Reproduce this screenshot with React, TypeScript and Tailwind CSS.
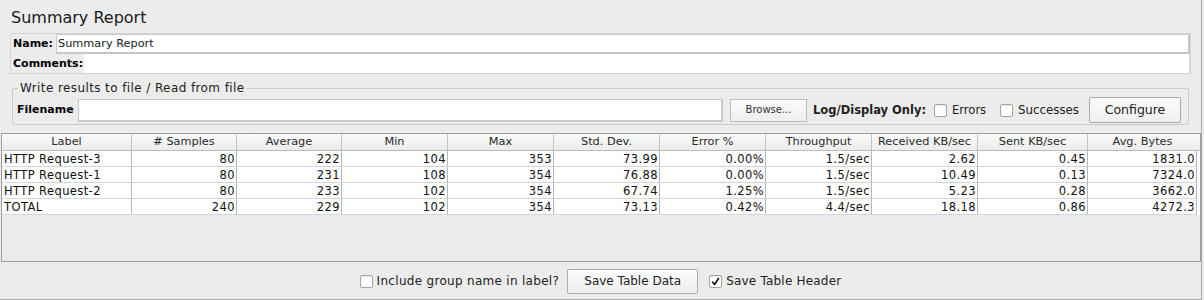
import React from "react";

const rows: string[][] = [
  ["HTTP Request-3", "80", "222", "104", "353", "73.99", "0.00%", "1.5/sec", "2.62", "0.45", "1831.0"],
  ["HTTP Request-1", "80", "231", "108", "354", "76.88", "0.00%", "1.5/sec", "10.49", "0.13", "7324.0"],
  ["HTTP Request-2", "80", "233", "102", "354", "67.74", "1.25%", "1.5/sec", "5.23", "0.28", "3662.0"],
  ["TOTAL", "240", "229", "102", "354", "73.13", "0.42%", "4.4/sec", "18.18", "0.86", "4272.3"],
];

const headers = [
  "Label",
  "# Samples",
  "Average",
  "Min",
  "Max",
  "Std. Dev.",
  "Error %",
  "Throughput",
  "Received KB/sec",
  "Sent KB/sec",
  "Avg. Bytes",
];

const gridCols =
  "grid grid-cols-[130px_105px_105px_106px_106px_106px_106px_106px_106px_110px_109px]";

function CheckBox({ checked = false }: { checked?: boolean }) {
  return (
    <div className="w-[13px] h-[13px] bg-white border border-[#a3a3a3] rounded-[2px] shadow-[inset_0_1px_1px_rgba(0,0,0,0.08)] flex items-center justify-center">
      {checked && (
        <svg width="9" height="9" viewBox="0 0 9 9">
          <path d="M1.5 5 L3.5 7.5 L7.5 1.5" fill="none" stroke="#111" strokeWidth="1.6" strokeLinecap="round" strokeLinejoin="round" />
        </svg>
      )}
    </div>
  );
}

export default function App() {
  return (
    <div className="w-[1204px] h-[300px] bg-[#ececec] flex font-['DejaVu_Sans',sans-serif] text-black">
      <div className="w-[1201px] h-[300px] flex flex-col border-b border-[#a9a9a9]">
        {/* Title */}
        <div className="h-[33px] pl-[11px] pt-[8px] text-[16px] leading-[20px] text-[#1a1a1a]">
          Summary Report
        </div>

        {/* Name / Comments panel */}
        <div className="ml-[10px] w-[1181px] h-[41px] border border-[#d4d4d4] flex flex-col">
          <div className="flex h-[20px] items-center">
            <span className="pl-[2px] w-[45px] text-[11px] font-bold leading-[14px]">Name:</span>
            <div className="flex-1 h-[20px] bg-white border border-[#c9c9c9] border-r-2 border-b-2 border-r-[#c3c7cc] border-b-[#c3c7cc] flex items-center pl-[1px] text-[11.3px] leading-[14px] text-[#222]">
              Summary Report
            </div>
          </div>
          <div className="flex h-[19px] items-center">
            <span className="pl-[2px] w-[73px] text-[11px] font-bold leading-[14px]">Comments:</span>
            <div className="flex-1 h-[19px] bg-white border-r border-[#dadada]" />
          </div>
        </div>

        {/* Fieldset */}
        <fieldset className="ml-[12px] mt-[7px] w-[1177px] border border-[#cacaca] rounded-[2px] px-0 pb-0">
          <legend className="ml-[5px] px-[2px] text-[12px] tracking-[0.4px] leading-[14px] text-[#222]">
            Write results to file / Read from file
          </legend>
          <div className="flex items-center h-[29px] pt-[1px]">
            <span className="pl-[4px] w-[65px] text-[11px] font-bold leading-[14px]">Filename</span>
            <div className="w-[645px] h-[23px] bg-white border border-[#c9c9c9] border-r-2 border-b-2 border-r-[#c6c9ce] border-b-[#c6c9ce]" />
            <div className="ml-[7px] w-[77px] h-[23px] border border-[#bdbdbd] bg-gradient-to-b from-[#fbfbfb] to-[#efefef] flex items-center justify-center text-[10px] text-[#333] leading-[12px]">
              Browse...
            </div>
            <span className="ml-[6px] text-[11.5px] font-bold leading-[14px] text-[#222]">Log/Display Only:</span>
            <div className="ml-[8px]">
              <CheckBox />
            </div>
            <span className="ml-[5px] text-[11.5px] leading-[14px] text-[#222]">Errors</span>
            <div className="ml-[14px]">
              <CheckBox />
            </div>
            <span className="ml-[5px] text-[11.8px] leading-[14px] text-[#222]">Successes</span>
            <div className="ml-[10px] w-[92px] h-[26px] border border-[#ababab] rounded-[2px] bg-gradient-to-b from-[#fdfdfd] to-[#eeeeee] flex items-center justify-center text-[12.5px] leading-[14px] text-[#222]">
              Configure
            </div>
          </div>
        </fieldset>

        {/* Table scroll pane */}
        <div className="mt-[8px] ml-[1px] w-[1200px] h-[129px] border border-[#9e9e9e] bg-[#ebebeb]">
          <div className={`${gridCols} h-[17px] bg-gradient-to-b from-[#fafafa] to-[#ececec] border-b border-[#bcbcbc]`}>
            {headers.map((h, i) => (
              <div
                key={h}
                className={`h-[16px] flex items-center justify-center text-[11.3px] leading-[14px] text-[#2a2a2a] ${i < headers.length - 1 ? "border-r border-[#c6c6c6]" : ""}`}
              >
                {h}
              </div>
            ))}
          </div>
          {rows.map((r) => (
            <div key={r[0]} className={`${gridCols} h-[16px] bg-white`}>
              {r.map((c, i) => (
                <div
                  key={i}
                  className={`h-[16px] border-r border-b border-r-[#b3b9c3] border-b-[#d2d7de] flex items-center text-[11.5px] tracking-[0.4px] leading-[14px] text-[#111] ${i === 0 ? "justify-start pl-[2px]" : "justify-end pr-[1px]"}`}
                >
                  {c}
                </div>
              ))}
            </div>
          ))}
        </div>

        {/* Bottom bar */}
        <div className="flex-1 flex items-center justify-center pt-[1px]">
          <CheckBox />
          <span className="ml-[4px] text-[12px] tracking-[0.3px] leading-[14px] text-[#222]">Include group name in label?</span>
          <div className="ml-[8px] w-[131px] h-[25px] border border-[#ababab] rounded-[2px] bg-gradient-to-b from-[#fdfdfd] to-[#eeeeee] flex items-center justify-center text-[12px] leading-[14px] text-[#222]">
            Save Table Data
          </div>
          <div className="ml-[11px]">
            <CheckBox checked />
          </div>
          <span className="ml-[4px] text-[12px] tracking-[0.2px] leading-[14px] text-[#222]">Save Table Header</span>
        </div>
      </div>
      <div className="w-[1px] h-[300px] bg-[#a9a9a9]" />
      <div className="w-[2px] h-[300px]" />
    </div>
  );
}
